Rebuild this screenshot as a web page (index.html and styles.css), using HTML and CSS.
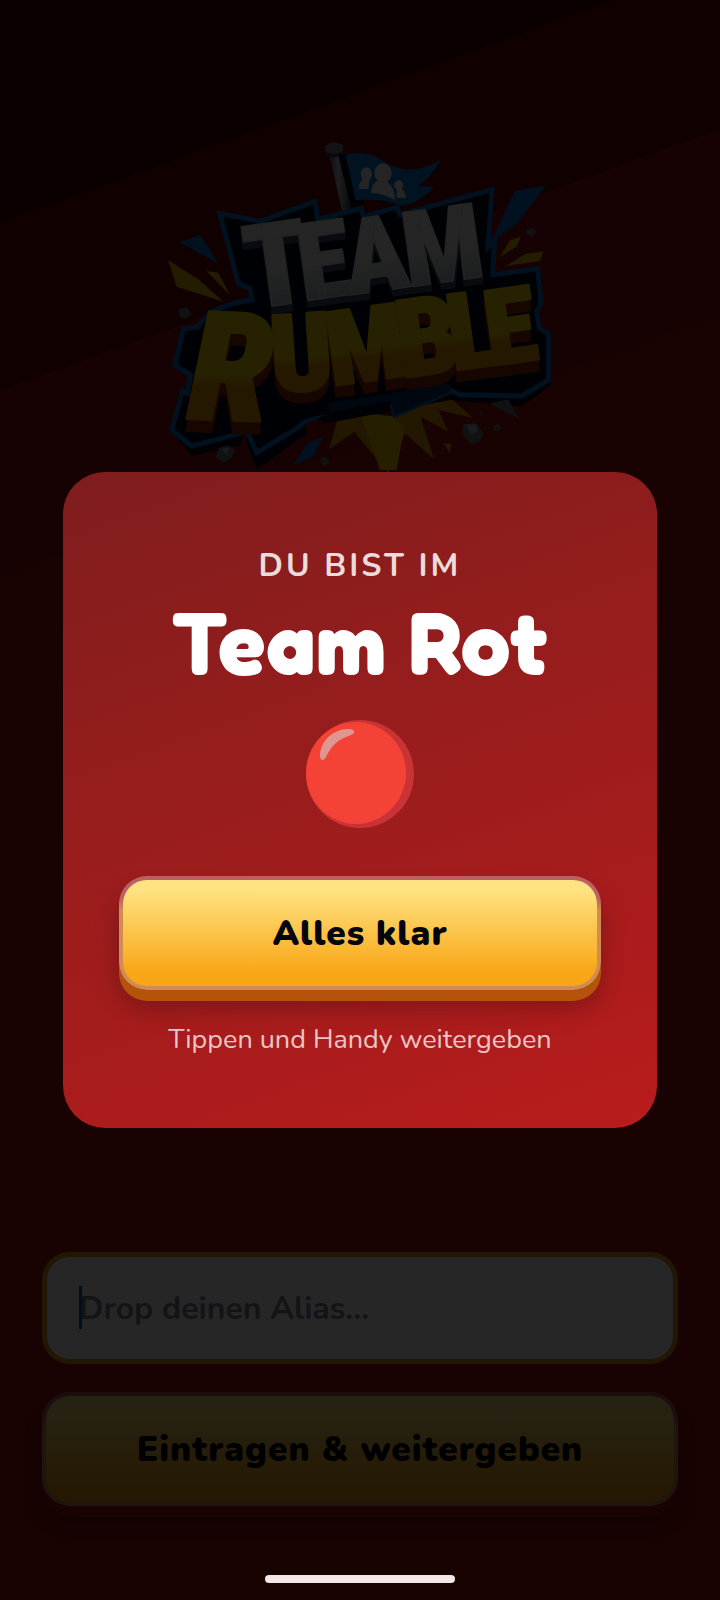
FILE: index.html
```html
<!DOCTYPE html>
<html lang="de">
<head>
<meta charset="UTF-8">
<meta name="viewport" content="width=device-width, initial-scale=1.0">
<title>Team Rumble</title>
<link rel="stylesheet" href="styles.css">
</head>
<body>
<main class="page">
  <svg class="logo" viewBox="0 0 1260 1050" role="img" aria-label="Team Rumble">
    <defs>
      <linearGradient id="silver" x1="0" y1="0" x2="0" y2="1">
        <stop offset="0.5" stop-color="#f8f8f8"/>
        <stop offset="1" stop-color="#98a2b4"/>
      </linearGradient>
      <linearGradient id="gold" x1="0" y1="0" x2="0" y2="1">
        <stop offset="0.54" stop-color="#ffde00"/>
        <stop offset="0.6" stop-color="#f8a400"/>
        <stop offset="1" stop-color="#f09a00"/>
      </linearGradient>
      <linearGradient id="pole" x1="0" y1="0" x2="1" y2="0">
        <stop offset="0" stop-color="#555c6a"/>
        <stop offset="0.4" stop-color="#c5cad2"/>
        <stop offset="1" stop-color="#353a48"/>
      </linearGradient>
    </defs>

    <!-- burst under the lettering -->
    <path fill="#e29a00" d="M570 870 538 987 613 935 715 1060 765 940 851 1017 812 890 895 935 865 870 967 893 900 830 700 840z"/>
    <path fill="#f6cf00" d="M635 890 690 1050 740 1050 762 925 722 880 690 860z"/>
    <path fill="#7a1500" d="M480 940 530 850 740 830 740 890 560 870z"/>

    <!-- flag -->
    <path fill="url(#pole)" d="M538 105 562 95 604 265 577 275z"/>
    <path fill="#7d838e" d="M525 78Q550 56 579 76L579 100Q552 122 525 104z"/>
    <path fill="#383d49" d="M525 92Q552 112 579 92L579 102Q552 122 525 104z"/>
    <path fill="#050a26" d="M566 100 590 104 640 250 604 262z"/>
    <path fill="#0878d8" d="M586 104C690 80 700 150 780 148C815 148 850 135 873 118Q845 172 803 198L852 200Q810 250 750 258C700 235 660 240 617 240z"/>
    <g fill="#f4f4f4">
      <ellipse cx="649" cy="162" rx="17" ry="20"/>
      <path d="M640 175 658 178 656 208 626 206Q628 184 640 175z"/>
      <ellipse cx="699" cy="159" rx="26" ry="29"/>
      <path d="M686 180 712 184Q737 210 735 240Q700 220 663 218Q664 190 686 180z"/>
      <circle cx="746" cy="195" r="14"/>
      <path d="M741 205 753 205Q767 214 768 235L739 233z"/>
    </g>

    <!-- dark plate with blue rim -->
    <path fill="#04071f" d="M75 945 125 1008 272 975 280 940 320 1048 472 940 460 880 530 910 900 840 1115 860 1203 795 1195 760 1110 805 905 790 550 840 440 860 320 990 260 920 125 960z"/>
    <path fill="#04071f" stroke="#0871cc" stroke-width="15" stroke-linejoin="miter" d="M209 280 330 304 495 244 503 298 635 265 640 290 740 262 750 284 1026 209 1014 380 1034 360 1028 464 1163 446 1173 550 1160 575 1168 625 1195 640 1195 780 1115 828 930 824 905 812 735 885 722 838 655 855 645 835 540 870 466 905 440 925 320 998 278 905 272 940 125 978 65 930 98 812 112 820 122 765 75 735 100 628 145 620Q180 555 306 540L300 505 265 490z"/>
    <path fill="#04071f" d="M466 860 540 840 645 815 905 780 1100 790 1050 800 905 790 735 850 540 880 470 895z"/>
    <path fill="#0a2f62" d="M535 850 900 790 900 815 735 885 720 842 540 878z"/>

    <!-- lettering -->
    <g class="letters team-side">
      <text x="302" y="588" font-size="350" transform="rotate(-8 302 588)">T</text>
      <text x="460" y="562" font-size="325" transform="rotate(-8 460 562)">E</text>
      <text x="600" y="544" font-size="315" transform="rotate(-8 600 544)">A</text>
      <text x="776" y="520" font-size="315" transform="rotate(-8 776 520)">M</text>
    </g>
    <g class="letters team">
      <text x="300" y="568" font-size="350" transform="rotate(-8 300 568)">T</text>
      <text x="458" y="544" font-size="325" transform="rotate(-8 458 544)">E</text>
      <text x="598" y="526" font-size="315" transform="rotate(-8 598 526)">A</text>
      <text x="774" y="502" font-size="315" transform="rotate(-8 774 502)">M</text>
    </g>
    <g class="letters rumble-side">
      <text class="lean" x="112" y="932" font-size="455" transform="rotate(2 112 932)">R</text>
      <text x="368" y="850" font-size="325" transform="rotate(-4 368 850)">U</text>
      <text x="545" y="832" font-size="310" transform="rotate(-8 545 832)">M</text>
      <text x="756" y="808" font-size="325" transform="rotate(-8 756 808)">B</text>
      <text x="908" y="786" font-size="320" transform="rotate(-8 908 786)">L</text>
      <text x="1020" y="772" font-size="315" transform="rotate(-8 1020 772)">E</text>
    </g>
    <g class="letters rumble">
      <text class="lean" x="112" y="896" font-size="455" transform="rotate(2 112 896)">R</text>
      <text x="368" y="818" font-size="325" transform="rotate(-4 368 818)">U</text>
      <text x="545" y="798" font-size="310" transform="rotate(-8 545 798)">M</text>
      <text x="756" y="774" font-size="325" transform="rotate(-8 756 774)">B</text>
      <text x="908" y="752" font-size="320" transform="rotate(-8 908 752)">L</text>
      <text x="1020" y="738" font-size="315" transform="rotate(-8 1020 738)">E</text>
    </g>

    <!-- splinters and stones -->
    <g fill="#0871cc">
      <path d="M88 367 150 345 207 432z"/>
      <path d="M1095 212 1190 196 1102 308 1022 368z"/>
      <path d="M472 970 522 950 486 1012 430 1034z"/>
    </g>
    <g fill="#e8b800">
      <path d="M54 420 145 478 220 545 80 500z"/>
      <path d="M168 452 205 458 240 525z"/>
      <path d="M1050 411 1080 360 1112 351 1100 380z"/>
      <path d="M1068 437 1125 402 1180 394 1170 423z"/>
      <path d="M880 970 903 972 900 998z"/>
    </g>
    <g fill="#6d7480">
      <path d="M84 566 110 563 126 582 108 598 90 590z"/>
      <path d="M1128 332 1145 322 1161 334 1148 350 1130 344z"/>
      <path d="M205 985 235 976 254 990 246 1012 222 1028 198 1015z"/>
      <path d="M512 1014 528 1010 538 1026 524 1040 512 1030z"/>
      <path d="M942 912 980 910 1001 942 990 964 965 974 934 940z"/>
      <path d="M1030 918 1044 911 1054 922 1044 935 1030 930z"/>
      <path d="M1020 850 1075 838 1107 895 1055 870z"/>
      <path d="M986 878 998 878 998 886z"/>
    </g>
    <path fill="#aeb4bd" d="M948 915 975 912 985 930 965 945zM215 988 238 982 230 1005z"/>
  </svg>

  <form class="join">
    <div class="field">
      <input class="alias" type="text" aria-label="Alias" placeholder="Drop deinen Alias...">
      <span class="caret"></span>
    </div>
    <button class="btn" type="button">Eintragen &amp; weitergeben</button>
  </form>
</main>

<div class="overlay">
  <section class="card" role="dialog" aria-modal="true" aria-labelledby="team">
    <p class="kicker">DU BIST IM</p>
    <h1 class="team-name" id="team">Team Rot</h1>
    <svg class="ball" viewBox="0 0 108 108" aria-hidden="true">
      <circle cx="54" cy="54" r="54" fill="#c93335"/>
      <ellipse cx="50" cy="53" rx="50" ry="51" fill="#f44336"/>
      <path fill="#df9691" d="M14 36C14 22 26 9 43 9C49 9 50 13 45 15C31 20 26 25 20 37C17 42 14 40 14 36z"/>
    </svg>
    <button class="btn" type="button">Alles klar</button>
    <p class="hint">Tippen und Handy weitergeben</p>
  </section>
</div>
<div class="home-bar"></div>
</body>
</html>
```

FILE: styles.css
```css
* {
  box-sizing: border-box;
}

body {
  margin: 0;
  font-family: Nunito, Lato, sans-serif;
  background: #a01010;
}

/* diagonal bands, dark to red */
.page {
  display: flex;
  flex-direction: column;
  align-items: center;
  min-height: 100vh;
  padding: 120px 42px 94px;
  background: linear-gradient(160deg, #480303 12%, #6b0303 12%, #6b0303 21%, #931010 21%, #931010 31%, #a01010 31%);
}

.logo {
  display: block;
  width: 100%;
  max-width: 420px;
  overflow: visible;
}

.letters {
  font-family: "Liberation Sans Narrow", "Roboto Condensed", "DejaVu Sans Condensed", sans-serif;
  font-weight: 900;
  stroke-width: 8px;
  stroke-linejoin: round;
}

.lean {
  font-style: italic;
}

.team-side {
  fill: #3a4a68;
  stroke: #3a4a68;
}

.team {
  fill: url(#silver);
  stroke: #e4e6ea;
  stroke-width: 4px;
}

.rumble-side {
  fill: #9c2c00;
  stroke: #9c2c00;
}

.rumble {
  fill: url(#gold);
  stroke: url(#gold);
}

.join {
  display: flex;
  flex-direction: column;
  gap: 28px;
  width: 100%;
  margin-top: auto;
}

.field {
  position: relative;
}

.alias {
  display: block;
  width: 100%;
  height: 112px;
  padding: 0 32px;
  border: 5px solid #d69a1c;
  border-radius: 28px;
  background: #fff;
  font-family: inherit;
  font-size: 32px;
  font-weight: 700;
  color: #111827;
}

.alias::placeholder {
  color: #8088a0;
  opacity: 1;
}

.caret {
  position: absolute;
  top: 34px;
  left: 37px;
  width: 3px;
  height: 43px;
  background: #0b63b8;
}

.btn {
  display: block;
  width: 100%;
  height: 114px;
  border: 4px solid transparent;
  border-radius: 28px;
  background:
    linear-gradient(#ffe382 8%, #f8a615 88%) padding-box,
    linear-gradient(#bd6062 20%, #d08c52 30%) border-box;
  box-shadow: 0 11px 0 #b45309, 0 18px 24px rgba(0, 0, 0, 0.25);
  font-family: inherit;
  font-size: 35px;
  font-weight: 900;
  letter-spacing: 1px;
  color: #05050d;
}

.join .btn {
  box-shadow: 0 11px 0 #a01010, 0 18px 24px rgba(0, 0, 0, 0.25);
}

.overlay {
  position: fixed;
  inset: 0;
  display: flex;
  align-items: center;
  justify-content: center;
  padding: 0 63px;
  background: rgba(0, 0, 0, 0.85);
}

.card {
  display: flex;
  flex-direction: column;
  align-items: center;
  width: 100%;
  padding: 72px 56px 68px;
  border-radius: 42px;
  background: linear-gradient(160deg, #7f1d1d, #b91c1c);
  color: #fff;
  text-align: center;
}

.kicker {
  margin: 0;
  font-size: 32px;
  font-weight: 700;
  line-height: 44px;
  letter-spacing: 3px;
  color: rgba(255, 255, 255, 0.86);
}

.team-name {
  margin: 4px 0 28px;
  font-family: "Fredoka One", Fredoka, Lato, sans-serif;
  font-size: 88px;
  font-weight: 700;
  line-height: 100px;
  letter-spacing: 1px;
}

.ball {
  width: 108px;
  height: 108px;
  margin-bottom: 48px;
}

.hint {
  margin: 30px 0 0;
  font-size: 27px;
  line-height: 40px;
  color: rgba(255, 255, 255, 0.75);
}

.home-bar {
  position: fixed;
  bottom: 17px;
  left: 50%;
  width: 190px;
  height: 8px;
  margin-left: -95px;
  border-radius: 4px;
  background: #f2e6e8;
}
```
